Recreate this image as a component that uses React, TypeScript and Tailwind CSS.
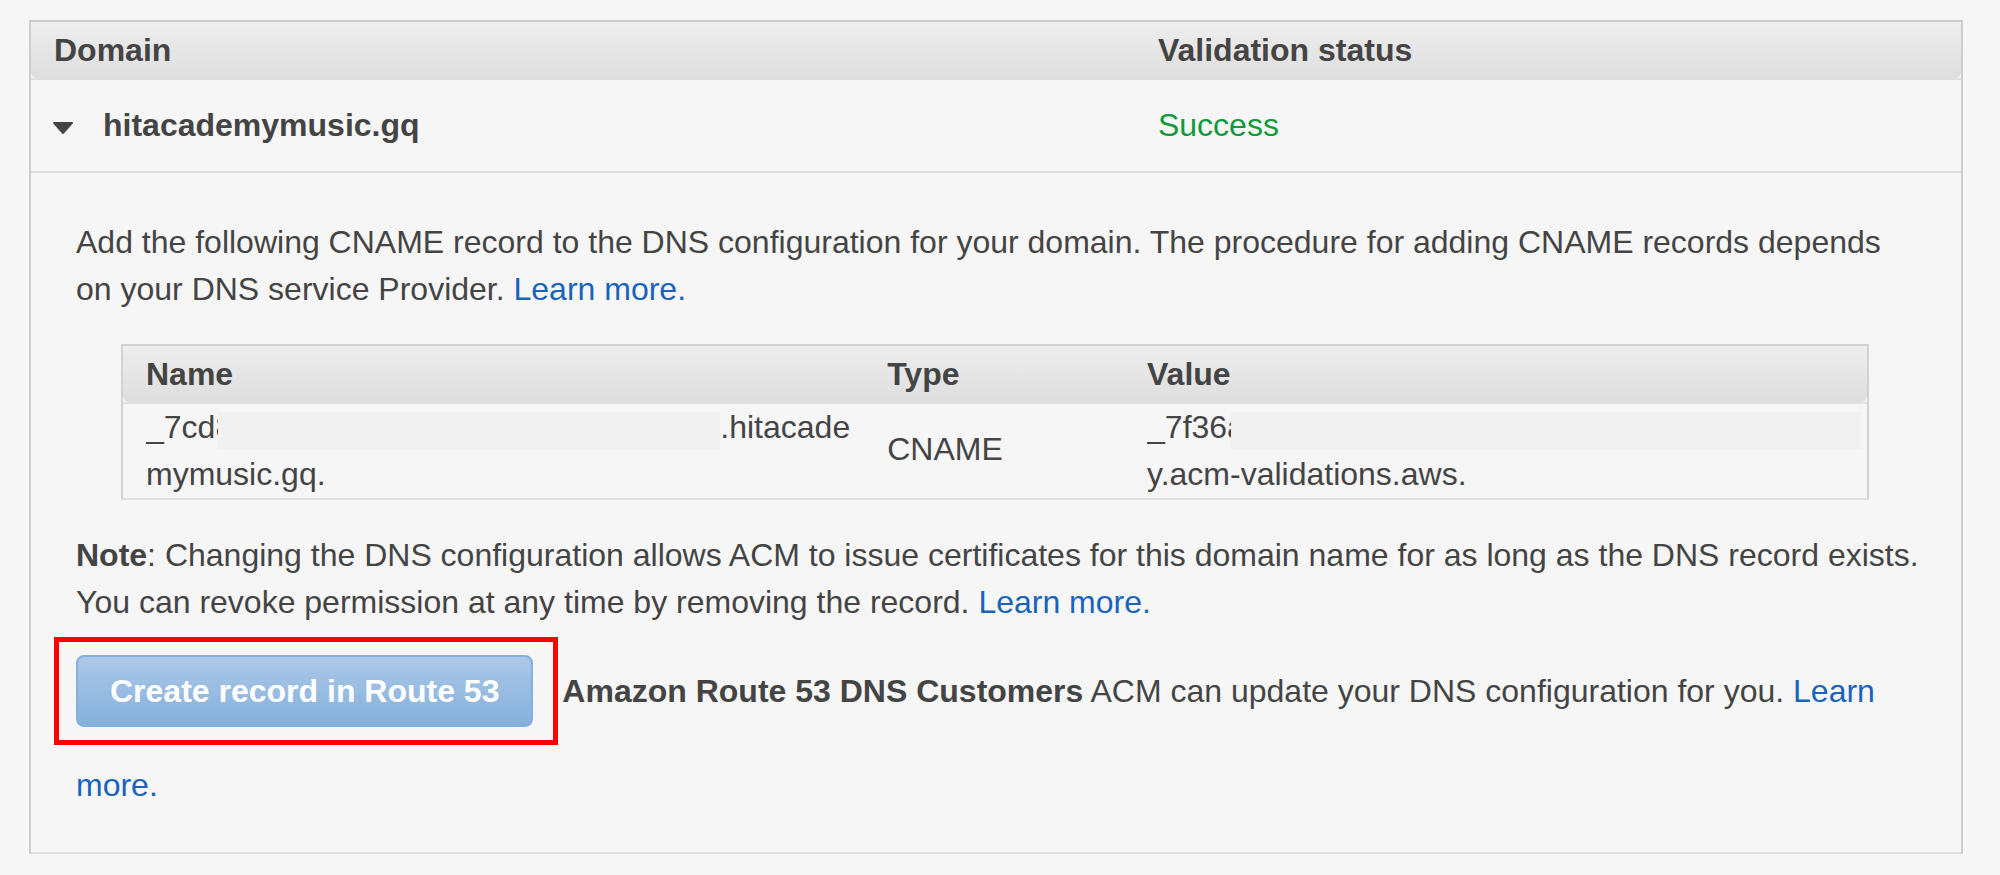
import React, { useState } from "react";

const headCell =
  "h-14 bg-linear-to-b from-[#eeeeee] to-[#dedede] p-0 text-left align-middle font-bold";

function LearnMore() {
  return (
    <a href="#learn-more" className="text-[#1a63bd] hover:underline">
      Learn more.
    </a>
  );
}

function Masked({ start, end }: { start: string; end?: string }) {
  return (
    <span className="flex">
      <span className={end ? "w-[72px] shrink-0 overflow-hidden" : "w-[84px] shrink-0 overflow-hidden"}>{start}</span>
      <span className="mt-2 h-[37px] grow bg-[#f1f1f1]" />
      {end && <span className="shrink-0">{end}</span>}
    </span>
  );
}

function RecordTable() {
  return (
    <div className="mt-[31px] mr-[52px] ml-[45px] border-2 border-[#d2d2d2] border-b-[#dedede]">
      <table className="w-full table-fixed border-separate border-spacing-0">
        <colgroup>
          <col className="w-[42.5%]" />
          <col className="w-[14.9%]" />
          <col />
        </colgroup>
        <thead>
          <tr>
            <th scope="col" className={`${headCell} rounded-bl-md pl-[23px]`}>Name</th>
            <th scope="col" className={`${headCell} pl-[23px]`}>Type</th>
            <th scope="col" className={`${headCell} rounded-br-md pl-[23px]`}>Value</th>
          </tr>
        </thead>
        <tbody>
          <tr>
            <td className="border-t-2 border-[#e2e2e2] p-0 pr-[14px] pl-[23px]">
              <Masked start="_7cd8" end=".hitacade" />
              mymusic.gq.
            </td>
            <td className="border-t-2 border-[#e2e2e2] p-0 pb-1 pl-[23px]">CNAME</td>
            <td className="border-t-2 border-[#e2e2e2] p-0 pr-[6px] pl-[23px]">
              <Masked start="_7f36a" />
              y.acm-validations.aws.
            </td>
          </tr>
        </tbody>
      </table>
    </div>
  );
}

export default function App() {
  const [open, setOpen] = useState(true);
  return (
    <main className="min-h-screen bg-[#f6f6f6] pt-5 pr-[37px] pb-5 pl-[29px] font-['Liberation_Sans',Arial,sans-serif] text-[32px] leading-[47px] text-[#444444]">
      <div className="border-2 border-[#cccccc] border-b-[#dedede]">
        <table className="w-full table-fixed border-separate border-spacing-0">
          <colgroup>
            <col className="w-[57.2%]" />
            <col />
          </colgroup>
          <thead>
            <tr>
              <th scope="col" className={`${headCell} rounded-bl-md pl-[23px]`}>Domain</th>
              <th scope="col" className={`${headCell} rounded-br-md pl-[23px]`}>Validation status</th>
            </tr>
          </thead>
          <tbody>
            <tr>
              <td className="h-[95px] border-y-2 border-[#dedede] p-0 pl-[22px]">
                <button
                  type="button"
                  aria-expanded={open}
                  onClick={() => setOpen(!open)}
                  className="flex items-center gap-[30px] font-bold"
                >
                  <svg viewBox="0 0 20 12" className="mt-1 h-3 w-5" fill="#444444" aria-hidden="true">
                    <path d="M1 0h18q2 0 .5 1.800L11.200 11.300q-1.200 1.200-2.400 0L.5 1.800Q-1 0 1 0Z" />
                  </svg>
                  hitacademymusic.gq
                </button>
              </td>
              <td className="border-y-2 border-[#dedede] p-0 pl-[23px] text-[#12993c]">Success</td>
            </tr>
            {open && (
              <tr>
                <td colSpan={2} className="p-0 pt-[46px] pr-10 pb-5 pl-[45px]">
                  <p>
                    Add the following CNAME record to the DNS configuration for your domain. The procedure for adding
                    CNAME records depends on your DNS service Provider. <LearnMore />
                  </p>
                  <RecordTable />
                  <p className="mt-8">
                    <strong>Note</strong>: Changing the DNS configuration allows ACM to issue certificates for this
                    domain name for as long as the DNS record exists. You can revoke permission at any time by removing
                    the record. <LearnMore />
                  </p>
                  <p className="mt-[18px] leading-[94px]">
                    <span className="relative mr-5 inline-block leading-[68px]">
                      <button
                        type="button"
                        className="rounded-lg border-2 border-[#84b0de] bg-linear-to-b from-[#abc8e7] to-[#86b0dc] px-8 font-bold text-white"
                      >
                        Create record in Route 53
                      </button>
                      <span className="pointer-events-none absolute -top-[18px] -right-[25px] -bottom-[18px] -left-[22px] border-5 border-[#ff0000]" />
                    </span>{" "}
                    <strong>Amazon Route 53 DNS Customers</strong> ACM can update your DNS configuration for you.{" "}
                    <LearnMore />
                  </p>
                </td>
              </tr>
            )}
          </tbody>
        </table>
      </div>
    </main>
  );
}
